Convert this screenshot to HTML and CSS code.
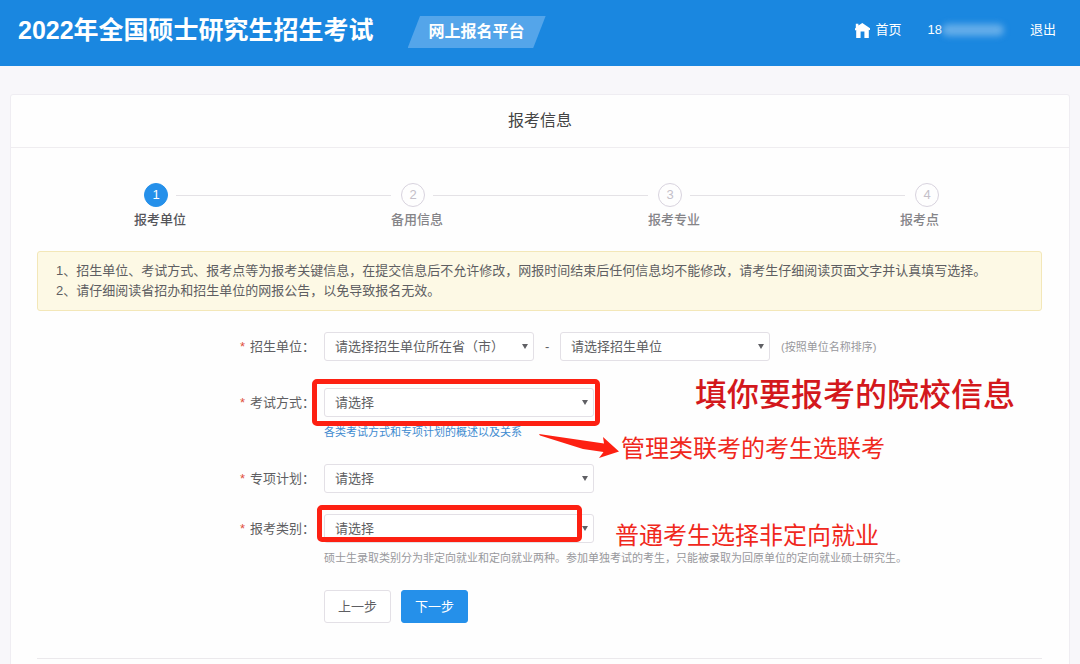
FILE: index.html
```html
<!DOCTYPE html>
<html lang="zh-CN">
<head>
<meta charset="utf-8">
<title>报考信息</title>
<link rel="stylesheet" href="styles.css">
</head>
<body>
<header class="header">
  <h1 class="brand">2022年全国硕士研究生招生考试</h1>
  <span class="platform">网上报名平台</span>
  <nav class="nav">
    <a class="nav-link home" href="#">
      <svg class="home-icon" width="15" height="15" viewBox="0 0 15 15" aria-hidden="true"><path fill="currentColor" d="M0.8 0.8 H3.4 V2.6 L7.3 0 L15 5.2 V7.2 L13.8 6.8 V15 H9.4 V8.6 H5.6 V15 H1.2 V7 L0 7.4 V5.4 L0.8 4.8 Z"/></svg>
      首页
    </a>
    <span class="account">18<span class="account-mask"></span></span>
    <a class="nav-link" href="#">退出</a>
  </nav>
</header>

<main class="card">
  <h2 class="card-title">报考信息</h2>
  <div class="card-body">
    <ol class="steps">
      <li class="step step-active"><div class="step-head"><span class="step-num">1</span></div><span class="step-name">报考单位</span></li>
      <li class="step"><div class="step-head"><span class="step-num">2</span></div><span class="step-name">备用信息</span></li>
      <li class="step"><div class="step-head"><span class="step-num">3</span></div><span class="step-name">报考专业</span></li>
      <li class="step step-last"><div class="step-head"><span class="step-num">4</span></div><span class="step-name">报考点</span></li>
    </ol>

    <div class="notice">
      <p>1、招生单位、考试方式、报考点等为报考关键信息，在提交信息后不允许修改，网报时间结束后任何信息均不能修改，请考生仔细阅读页面文字并认真填写选择。</p>
      <p>2、请仔细阅读省招办和招生单位的网报公告，以免导致报名无效。</p>
    </div>

    <form class="form">
      <div class="row row-loose">
        <label class="label" for="province"><span class="required">*</span>招生单位：</label>
        <div class="control control-inline">
          <span class="select select-short"><select id="province"><option>请选择招生单位所在省（市）</option></select></span>
          <span class="dash">-</span>
          <span class="select select-short"><select id="unit" aria-label="招生单位"><option>请选择招生单位</option></select></span>
          <span class="hint">(按照单位名称排序)</span>
        </div>
      </div>
      <div class="row">
        <label class="label" for="mode"><span class="required">*</span>考试方式：</label>
        <div class="control">
          <span class="select"><select id="mode"><option>请选择</option></select></span>
          <a class="help link" href="#">各类考试方式和专项计划的概述以及关系</a>
          <span class="mark mark-mode"></span>
        </div>
      </div>
      <div class="row row-tight">
        <label class="label" for="plan"><span class="required">*</span>专项计划：</label>
        <div class="control">
          <span class="select"><select id="plan"><option>请选择</option></select></span>
        </div>
      </div>
      <div class="row">
        <label class="label" for="category"><span class="required">*</span>报考类别：</label>
        <div class="control">
          <span class="select"><select id="category"><option>请选择</option></select></span>
          <p class="help hint">硕士生录取类别分为非定向就业和定向就业两种。参加单独考试的考生，只能被录取为回原单位的定向就业硕士研究生。</p>
          <span class="mark mark-category"></span>
        </div>
      </div>
      <div class="actions">
        <button class="btn" type="button">上一步</button>
        <button class="btn btn-primary" type="submit">下一步</button>
      </div>

      <span class="note note-school">填你要报考的院校信息</span>
      <svg class="note-arrow" width="80" height="24" viewBox="0 0 80 24" aria-hidden="true"><path fill="#fd2012" d="M0 0 L65 9.5 L64 3 L80 17.5 L60 24 L64.5 18 L44 15 L1 1.6 Z"/></svg>
      <span class="note note-mode">管理类联考的考生选联考</span>
      <span class="note note-category">普通考生选择非定向就业</span>
    </form>
  </div>
</main>
</body>
</html>
```
FILE: styles.css
```css
* {
  box-sizing: border-box;
}

body {
  margin: 0;
  background: #f8f7fa;
  color: #5e5e62;
  font: 13px/20px "Liberation Sans", "Noto Sans CJK SC", sans-serif;
}

h1, h2, p, ol {
  margin: 0;
  padding: 0;
}

a {
  color: inherit;
  text-decoration: none;
}

/* Top bar */
.header {
  display: flex;
  align-items: flex-start;
  height: 66px;
  padding: 14px 24px 0 18px;
  background: #1a87e0;
  color: #fff;
}

.brand {
  font-size: 25px;
  line-height: 32px;
  white-space: nowrap;
}

.platform {
  width: 138px;
  margin: 2px 0 0 34px;
  background: #54a5ea;
  clip-path: polygon(9% 0, 100% 0, 91% 100%, 0 100%);
  font-size: 16px;
  font-weight: bold;
  line-height: 32px;
  text-align: center;
}

.nav {
  display: flex;
  align-items: center;
  gap: 26px;
  height: 32px;
  margin-left: auto;
}

.home {
  display: flex;
  align-items: center;
  gap: 6px;
}

.account {
  display: flex;
  align-items: center;
}

.account-mask {
  width: 62px;
  height: 12px;
  border-radius: 6px;
  background: #64ade9;
  filter: blur(3px);
}

/* Card */
.card {
  min-height: 600px;
  margin: 28px 10px 0;
  border: 1px solid #efedf2;
  border-radius: 3px;
  background: #fefefe;
}

.card-title {
  border-bottom: 1px solid #efedf0;
  color: #444;
  font-size: 16px;
  font-weight: normal;
  line-height: 52px;
  text-align: center;
}

.card-body {
  padding: 35px 27px 0 26px;
}

/* Progress */
.steps {
  display: grid;
  grid-template-columns: 1fr 1fr 1fr 34px;
  padding: 0 103px 0 97px;
  list-style: none;
}

.step-head {
  display: flex;
  align-items: center;
  gap: 8px;
  padding-left: 10px;
}

.step-head::after {
  flex: 1;
  border-top: 1px solid #e4e2e6;
  content: "";
}

.step-num {
  width: 24px;
  height: 24px;
  border: 1px solid #d8d3de;
  border-radius: 50%;
  color: #c4c0c9;
  line-height: 22px;
  text-align: center;
}

.step-name {
  display: block;
  margin-top: 3px;
  color: #858488;
  font-weight: 500;
  white-space: nowrap;
}

.step-active .step-num {
  border-color: #2590ea;
  background: #2590ea;
  color: #fff;
}

.step-active .step-name {
  color: #55555a;
}

.step-last {
  display: flex;
  flex-direction: column;
  align-items: flex-end;
}

.step-last .step-head::after {
  display: none;
}

/* Notice */
.notice {
  margin-top: 21px;
  padding: 9px 18px;
  border: 1px solid #f3e7b8;
  border-radius: 3px;
  background: #fdf9e5;
}

/* Form */
.form {
  position: relative;
  padding: 21px 0 35px;
  border-bottom: 1px solid #ebe9ec;
}

.row {
  display: grid;
  grid-template-columns: 278px 1fr;
  gap: 9px;
  margin-bottom: 24px;
}

.row-loose {
  margin-bottom: 27px;
}

.row-tight {
  margin-bottom: 21px;
}

.label {
  line-height: 29px;
  text-align: right;
}

.required {
  margin-right: 5px;
  color: #e05040;
}

.control {
  position: relative;
}

.control-inline {
  display: flex;
  align-items: center;
  gap: 11px;
}

.select {
  display: block;
  position: relative;
  width: 270px;
}

.select-short {
  width: 210px;
}

.select::after {
  position: absolute;
  top: 12px;
  right: 6px;
  border: 3px solid transparent;
  border-top: 5px solid #606065;
  border-bottom: 0;
  content: "";
  pointer-events: none;
}

select {
  display: block;
  width: 100%;
  height: 29px;
  padding: 0 10px;
  border: 1px solid #e3e0e6;
  border-radius: 3px;
  appearance: none;
  background: #fff;
  color: #5e5e62;
  font: inherit;
}

.dash {
  width: 4px;
}

.hint {
  color: #98989c;
  font-size: 11px;
}

.help {
  display: block;
  margin-top: 7px;
  font-size: 11px;
  line-height: 16px;
}

.link {
  width: fit-content;
  color: #3f8bd0;
}

.actions {
  display: flex;
  gap: 10px;
  padding-left: 287px;
}

.btn {
  width: 67px;
  height: 33px;
  padding: 0;
  border: 1px solid #e3e0e6;
  border-radius: 3px;
  background: #fff;
  color: #5e5e62;
  font: inherit;
}

.btn-primary {
  border-color: #2590ea;
  background: #2590ea;
  color: #fff;
}

/* Red annotations laid over the form */
.mark {
  position: absolute;
  top: -9px;
  border: 5px solid #fd2012;
  border-radius: 5px;
  pointer-events: none;
}

.mark-mode {
  left: -12px;
  width: 288px;
  height: 47px;
}

.mark-category {
  left: -7px;
  width: 265px;
  height: 37px;
}

.note {
  position: absolute;
  color: #f0281c;
  font-size: 24px;
  line-height: 32px;
  white-space: nowrap;
}

.note-school {
  top: 68px;
  left: 658px;
  color: #d3181c;
  font-size: 32px;
  font-weight: 500;
}

.note-mode {
  top: 122px;
  left: 584px;
}

.note-category {
  top: 209px;
  left: 578px;
}

.note-arrow {
  position: absolute;
  top: 123px;
  left: 502px;
}
```
